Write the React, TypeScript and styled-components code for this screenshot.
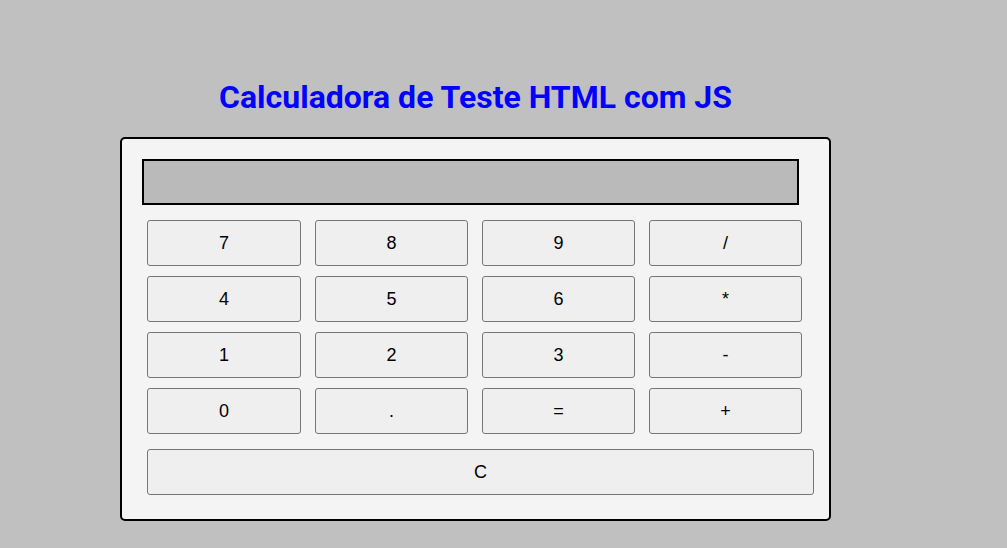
import React from "react";
import styled, { createGlobalStyle } from "styled-components";

const Global = createGlobalStyle`
  html, body { margin: 0; padding: 0; }
  body { background: #c0c0c0; width: 1007px; height: 548px; overflow: hidden; }
`;

const Page = styled.div`
  display: flex;
  flex-direction: column;
  align-items: flex-start;
  padding: 77px 0 0 120px;
`;

const Title = styled.h1`
  margin: 0 0 20px 0;
  width: 711px;
  text-align: center;
  font-family: Roboto, "Liberation Sans", sans-serif;
  font-weight: 700;
  font-size: 32px;
  line-height: 40px;
  color: #0000ff;
`;

const Calc = styled.div`
  box-sizing: border-box;
  width: 711px;
  height: 384px;
  background: #f4f4f4;
  border: 2px solid #000;
  border-radius: 5px;
  padding: 20px 0 0 20px;
  display: flex;
  flex-direction: column;
`;

const Display = styled.div`
  box-sizing: border-box;
  width: 657px;
  height: 46px;
  background: #bababa;
  border: 2px solid #000;
`;

const Keys = styled.div`
  display: grid;
  grid-template-columns: 154px 153px 153px 153px;
  column-gap: 14px;
  row-gap: 10px;
  margin: 15px 0 0 5px;
`;

const Key = styled.button<{ $wide?: boolean }>`
  box-sizing: border-box;
  height: 46px;
  width: ${(p) => (p.$wide ? "667px" : "auto")};
  background: #efefef;
  border: 1px solid #767676;
  border-radius: 3px;
  font-family: "Liberation Sans", Arial, sans-serif;
  font-size: 18px;
  color: #000;
  padding: 0;
  cursor: pointer;
`;

const ClearRow = styled.div`
  margin: 15px 0 0 5px;
  display: flex;
`;

const keys = ["7", "8", "9", "/", "4", "5", "6", "*", "1", "2", "3", "-", "0", ".", "=", "+"];

export default function App() {
  return (
    <>
      <Global />
      <Page>
        <Title>Calculadora de Teste HTML com JS</Title>
        <Calc>
          <Display />
          <Keys>
            {keys.map((k) => (
              <Key key={k}>{k}</Key>
            ))}
          </Keys>
          <ClearRow>
            <Key $wide>C</Key>
          </ClearRow>
        </Calc>
      </Page>
    </>
  );
}
